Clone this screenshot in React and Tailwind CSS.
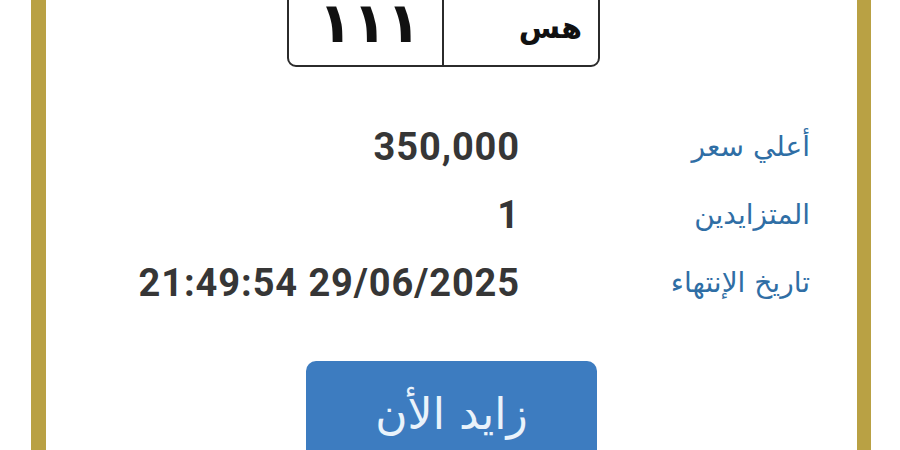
export default function App() {
  const rows = [
    ['أعلي سعر', '350,000'],
    ['المتزايدين', '1'],
    ['تاريخ الإنتهاء', '21:49:54 29/06/2025'],
  ]

  return (
    <div className="w-[900px] h-[450px] bg-white overflow-hidden">
      <div className="ml-[31px] w-[840px] h-[450px] border-l-[15px] border-r-[14px] border-[#b9a144] flex flex-col">
        {/* plate */}
        <div className="shrink-0 ml-[241px] -mt-[24px] w-[313px] h-[91px] border-2 border-[#2b2b2b] rounded-b-[9px] flex">
          <div className="w-[155px] border-r-2 border-[#2b2b2b] flex items-start justify-center pt-[23px] pl-[8px] font-['DejaVu_Sans',sans-serif] font-bold text-[56px] leading-[44px] tracking-[-7px] text-[#111]">
            ١١١
          </div>
          <div dir="rtl" className="flex-1 flex items-center pr-[16px] pt-[12px] font-['DejaVu_Sans',sans-serif] font-bold text-[30px] text-[#111]">
            هس
          </div>
        </div>

        {/* details */}
        <div className="shrink-0 mt-[57px] flex flex-col gap-[22px]">
          {rows.map(([label, value]) => (
            <div key={label} className="flex items-center h-[46px]">
              <div className="w-[474px] text-right font-['Roboto',sans-serif] font-bold text-[38px] text-[#363636] tracking-[0.9px]">
                {value}
              </div>
              <div dir="rtl" className="w-[290px] text-right font-['DejaVu_Sans',sans-serif] text-[28px] text-[#2f6ea5]">
                {label}
              </div>
            </div>
          ))}
        </div>

        {/* button */}
        <div dir="rtl" className="shrink-0 ml-[260px] mt-[55px] w-[291px] h-[110px] rounded-[10px] bg-[#3d7cc0] flex justify-center pt-[20px] font-['DejaVu_Sans',sans-serif] text-[44px] text-[#eaf3fb]">
          زايد الأن
        </div>
      </div>
    </div>
  )
}
